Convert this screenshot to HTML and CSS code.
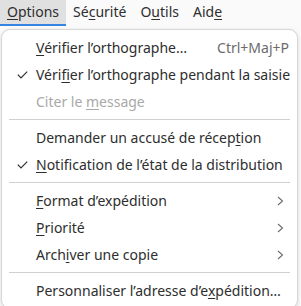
FILE: index.html
```html
<!DOCTYPE html>
<html lang="fr">
<head>
  <meta charset="UTF-8" />
  <title>Options</title>
  <link rel="stylesheet" href="styles.css">
</head>
<body>
  <div class="menubar">
    <div class="top-item active"><u>O</u>ptions</div>
    <div class="top-item">Sé<u>c</u>urité</div>
    <div class="top-item">O<u>u</u>tils</div>
    <div class="top-item">Aid<u>e</u></div>
  </div>

  <div class="menu">
    <div class="item">
      <span class="check"></span>
      <span class="label"><u>V</u>érifier l’orthographe…</span>
      <span class="shortcut">Ctrl+Maj+P</span>
    </div>
    <div class="item">
      <span class="check">
        <svg width="11" height="8" viewBox="0 0 11 8"><path d="M0.8 3.6 L4 6.8 L10.2 0.6" /></svg>
      </span>
      <span class="label">Véri<u>fi</u>er l’orthographe pendant la saisie</span>
    </div>
    <div class="item disabled">
      <span class="check"></span>
      <span class="label">Citer le <u>m</u>essage</span>
    </div>

    <div class="sep"></div>

    <div class="item">
      <span class="check"></span>
      <span class="label">Demander un accusé de récep<u>t</u>ion</span>
    </div>
    <div class="item">
      <span class="check">
        <svg width="11" height="8" viewBox="0 0 11 8"><path d="M0.8 3.6 L4 6.8 L10.2 0.6" /></svg>
      </span>
      <span class="label"><u>N</u>otification de l’état de la distribution</span>
    </div>

    <div class="sep"></div>

    <div class="item">
      <span class="check"></span>
      <span class="label"><u>F</u>ormat d’expédition</span>
      <span class="arrow"><svg width="7" height="10" viewBox="0 0 7 10"><path d="M1 1 L5.5 5 L1 9" /></svg></span>
    </div>
    <div class="item">
      <span class="check"></span>
      <span class="label"><u>P</u>riorité</span>
      <span class="arrow"><svg width="7" height="10" viewBox="0 0 7 10"><path d="M1 1 L5.5 5 L1 9" /></svg></span>
    </div>
    <div class="item">
      <span class="check"></span>
      <span class="label">Arch<u>i</u>ver une copie</span>
      <span class="arrow"><svg width="7" height="10" viewBox="0 0 7 10"><path d="M1 1 L5.5 5 L1 9" /></svg></span>
    </div>

    <div class="sep"></div>

    <div class="item">
      <span class="check"></span>
      <span class="label">Personnaliser l’adresse d’e<u>x</u>pédition…</span>
    </div>
  </div>
</body>
</html>
```

FILE: styles.css
```css
body {
  margin: 0;
  background: #fafafa;
  font-family: "Noto Sans", sans-serif;
  font-size: 14px;
  color: #2e2e2e;
  overflow: hidden;
}

u {
  text-underline-offset: 2px;
  text-decoration-thickness: 1px;
}

.menubar {
  display: flex;
  height: 26px;
  background: #fafafa;
}

.top-item {
  padding: 0 7px;
  line-height: 24px;
  border-bottom: 2px solid transparent;
}

.top-item.active {
  background: #e0e0e0;
  border-bottom-color: #3584e4;
}

.menu {
  margin: 3px 3px 0 1px;
  padding: 4px 0;
  background: #ffffff;
  border: 1px solid #d6d6d6;
  border-radius: 9px;
  box-shadow: 0 1px 4px rgba(0,0,0,0.12);
}

.item {
  display: flex;
  align-items: center;
  height: 27px;
  padding-right: 8px;
}

.check {
  width: 34px;
  flex: none;
  display: flex;
  justify-content: flex-end;
  padding-right: 8px;
  box-sizing: border-box;
}

.check svg path {
  fill: none;
  stroke: #2e2e2e;
  stroke-width: 1.2;
}

.label {
  flex: 1;
  white-space: nowrap;
}

.shortcut {
  color: #6b6b6b;
}

.arrow {
  display: flex;
  padding-right: 5px;
}

.arrow svg path {
  fill: none;
  stroke: #6b6b6b;
  stroke-width: 1.1;
}

.disabled {
  color: #a8a8a8;
}

.sep {
  height: 1px;
  margin: 4px 7px;
  background: #d0d0d0;
}
```
